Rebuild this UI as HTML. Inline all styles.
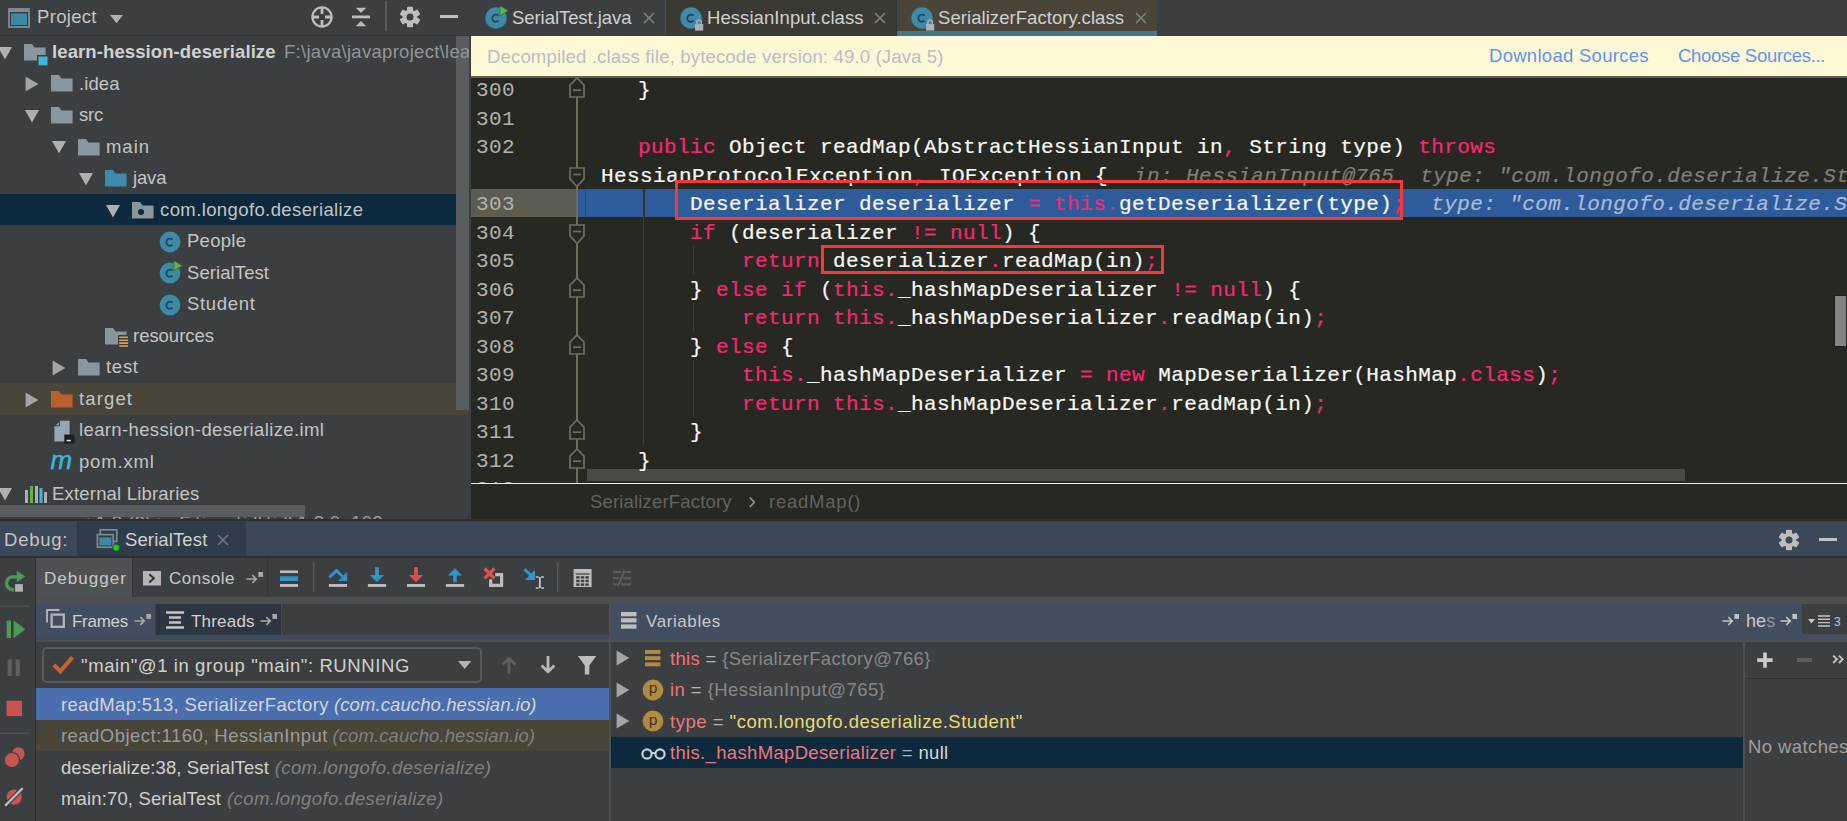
<!DOCTYPE html><html><head><meta charset="utf-8"><title>IDE</title>
<style>html,body{margin:0;padding:0}html{width:1847px;height:821px;overflow:hidden}body{width:1847px;height:821px;position:relative;overflow:hidden;background:#3c3f41;font-family:'Liberation Sans', sans-serif}.k{color:#f92672}.w{color:#f8f8f2}.h{color:#7f7f78;font-style:italic}.hb{color:#a9bbd8;font-style:italic}</style></head><body>
<div style="position:absolute;left:0;top:0;width:471px;height:520px;background:#3c3f41;overflow:hidden">
<div style="position:absolute;left:0px;top:35px;width:471px;height:1px;background:#323537;"></div>
<svg style="position:absolute;left:8px;top:8px;" width="22" height="20" viewBox="0 0 22 20"><rect x="1" y="1" width="20" height="18" fill="none" stroke="#7f8b93" stroke-width="1.8"/><rect x="1" y="1" width="20" height="3" fill="#7f8b93"/><rect x="3" y="5.5" width="16" height="11.5" fill="#3a8aa6"/></svg>
<div style="position:absolute;left:37px;top:2.0px;height:30px;line-height:30px;white-space:pre;font-family:'Liberation Sans', sans-serif;font-size:18.5px;letter-spacing:0.32px;font-weight:normal;font-style:normal;color:#c4c4c4;">Project</div>
<svg style="position:absolute;left:109.6px;top:14.5px;" width="13" height="9" viewBox="0 0 13 9"><path d="M0 0 H13 L6.5 8.3 Z" fill="#b0b0b0"/></svg>
<svg style="position:absolute;left:310px;top:5px;" width="24" height="24" viewBox="0 0 24 24"><circle cx="12" cy="12" r="9.6" fill="none" stroke="#bdbdbd" stroke-width="2.3"/><path d="M12 2 V9 M12 15 V22 M2 12 H9 M15 12 H22" stroke="#bdbdbd" stroke-width="2.8"/></svg>
<svg style="position:absolute;left:351px;top:6px;" width="20" height="22" viewBox="0 0 20 22"><path d="M1 10.9 H19" stroke="#bdbdbd" stroke-width="2.8"/><path d="M4.8 1.7 H15.2 L10 7 Z M4.8 20.2 H15.2 L10 14.9 Z" fill="#bdbdbd"/></svg>
<div style="position:absolute;left:385px;top:1px;width:1.7px;height:30px;background:#555758;"></div>
<svg style="position:absolute;left:399px;top:6px;" width="22" height="22" viewBox="0 0 22 22"><g transform="translate(11 11)"><rect x="-3" y="-10.2" width="6" height="20.4" rx="0.8" transform="rotate(0)" fill="#bdbdbd"/><rect x="-3" y="-10.2" width="6" height="20.4" rx="0.8" transform="rotate(60)" fill="#bdbdbd"/><rect x="-3" y="-10.2" width="6" height="20.4" rx="0.8" transform="rotate(120)" fill="#bdbdbd"/><circle r="7.4" fill="#bdbdbd"/><circle r="3.5" fill="#3c3f41"/></g></svg>
<div style="position:absolute;left:439.7px;top:15.4px;width:18.5px;height:3px;background:#bdbdbd;"></div>
<div style="position:absolute;left:0px;top:193.92999999999998px;width:471px;height:31.54px;background:#0d293e;"></div>
<div style="position:absolute;left:0px;top:383.17px;width:471px;height:31.54px;background:#494538;"></div>
<div style="position:absolute;left:456px;top:36px;width:13px;height:374px;background:#5a5d5f;"></div>
<svg style="position:absolute;left:-3px;top:45.8px;" width="16" height="14" viewBox="0 0 16 14"><path d="M1 1 L15 1 L8 13.5 Z" fill="#b0b0b0"/></svg>
<svg style="position:absolute;left:23.8px;top:44.10000000000001px;" width="22" height="17" viewBox="0 0 22 17"><path d="M0 0 H8 L10.5 3.4 H21.6 V16.4 H0 Z" fill="#8a969e"/></svg>
<svg style="position:absolute;left:36.5px;top:55.1px;" width="11" height="11" viewBox="0 0 11 11"><rect width="11" height="11" fill="#3c3f41"/><rect x="1.5" y="1.5" width="9" height="8.8" fill="#40b6e0"/></svg>
<div style="position:absolute;left:52px;top:37.0px;height:30px;line-height:30px;white-space:pre;font-family:'Liberation Sans', sans-serif;font-size:18.5px;letter-spacing:0.102px;font-weight:bold;font-style:normal;color:#d0d0d0;">learn-hession-deserialize</div>
<div style="position:absolute;left:284px;top:37.0px;height:30px;line-height:30px;white-space:pre;font-family:'Liberation Sans', sans-serif;font-size:18.5px;letter-spacing:0.288px;font-weight:normal;font-style:normal;color:#929597;">F:\java\javaproject\lea</div>
<svg style="position:absolute;left:25px;top:76.33999999999999px;" width="14" height="16" viewBox="0 0 14 16"><path d="M0.6 0.4 L13.4 8 L0.6 15.6 Z" fill="#a4a4a4"/></svg>
<svg style="position:absolute;left:51px;top:75.43999999999998px;" width="22" height="17" viewBox="0 0 22 17"><path d="M0 0 H8 L10.5 3.4 H21.6 V16.4 H0 Z" fill="#8a969e"/></svg>
<div style="position:absolute;left:79px;top:68.53999999999999px;height:30px;line-height:30px;white-space:pre;font-family:'Liberation Sans', sans-serif;font-size:18.5px;letter-spacing:0.094px;font-weight:normal;font-style:normal;color:#c4c4c4;">.idea</div>
<svg style="position:absolute;left:24px;top:108.88px;" width="16" height="14" viewBox="0 0 16 14"><path d="M1 1 L15 1 L8 13.5 Z" fill="#b0b0b0"/></svg>
<svg style="position:absolute;left:51px;top:106.97999999999999px;" width="22" height="17" viewBox="0 0 22 17"><path d="M0 0 H8 L10.5 3.4 H21.6 V16.4 H0 Z" fill="#8a969e"/></svg>
<div style="position:absolute;left:79px;top:100.08px;height:30px;line-height:30px;white-space:pre;font-family:'Liberation Sans', sans-serif;font-size:18.5px;letter-spacing:-0.186px;font-weight:normal;font-style:normal;color:#c4c4c4;">src</div>
<svg style="position:absolute;left:51px;top:140.42000000000002px;" width="16" height="14" viewBox="0 0 16 14"><path d="M1 1 L15 1 L8 13.5 Z" fill="#b0b0b0"/></svg>
<svg style="position:absolute;left:78px;top:138.52px;" width="22" height="17" viewBox="0 0 22 17"><path d="M0 0 H8 L10.5 3.4 H21.6 V16.4 H0 Z" fill="#8a969e"/></svg>
<div style="position:absolute;left:106px;top:131.62px;height:30px;line-height:30px;white-space:pre;font-family:'Liberation Sans', sans-serif;font-size:18.5px;letter-spacing:0.964px;font-weight:normal;font-style:normal;color:#c4c4c4;">main</div>
<svg style="position:absolute;left:78px;top:171.96px;" width="16" height="14" viewBox="0 0 16 14"><path d="M1 1 L15 1 L8 13.5 Z" fill="#b0b0b0"/></svg>
<svg style="position:absolute;left:105px;top:170.06px;" width="22" height="17" viewBox="0 0 22 17"><path d="M0 0 H8 L10.5 3.4 H21.6 V16.4 H0 Z" fill="#3d8daa"/></svg>
<div style="position:absolute;left:133px;top:163.16px;height:30px;line-height:30px;white-space:pre;font-family:'Liberation Sans', sans-serif;font-size:18.5px;letter-spacing:-0.151px;font-weight:normal;font-style:normal;color:#c4c4c4;">java</div>
<svg style="position:absolute;left:105px;top:203.5px;" width="16" height="14" viewBox="0 0 16 14"><path d="M1 1 L15 1 L8 13.5 Z" fill="#b0b0b0"/></svg>
<svg style="position:absolute;left:132px;top:201.6px;" width="22" height="17" viewBox="0 0 22 17"><path d="M0 0 H8 L10.5 3.4 H21.6 V16.4 H0 Z" fill="#8a969e"/></svg>
<svg style="position:absolute;left:137px;top:207.79999999999998px;" width="8" height="8" viewBox="0 0 8 8"><circle cx="4" cy="4" r="3" fill="#0d293e"/></svg>
<div style="position:absolute;left:160px;top:194.7px;height:30px;line-height:30px;white-space:pre;font-family:'Liberation Sans', sans-serif;font-size:18.5px;letter-spacing:0.393px;font-weight:normal;font-style:normal;color:#c4c4c4;">com.longofo.deserialize</div>
<svg style="position:absolute;left:157px;top:228.94px;" width="27" height="27" viewBox="0 0 27 27"><circle cx="13" cy="13" r="10.4" fill="#3d8ba8"/><path d="M15.5 10.7 A3.6 3.6 0 1 0 15.5 15.7" fill="none" stroke="#2a4452" stroke-width="1.75"/></svg>
<div style="position:absolute;left:187px;top:226.24px;height:30px;line-height:30px;white-space:pre;font-family:'Liberation Sans', sans-serif;font-size:18.5px;letter-spacing:0.278px;font-weight:normal;font-style:normal;color:#c4c4c4;">People</div>
<svg style="position:absolute;left:157px;top:260.47999999999996px;" width="27" height="27" viewBox="0 0 27 27"><circle cx="13" cy="13" r="10.4" fill="#3d8ba8"/><path d="M15.5 10.7 A3.6 3.6 0 1 0 15.5 15.7" fill="none" stroke="#2a4452" stroke-width="1.75"/><path d="M16.9 0.6 L25.4 5.7 L16.9 10.8 Z" fill="#5cb83f" stroke="#3c3f41" stroke-width="0.5"/></svg>
<div style="position:absolute;left:187px;top:257.78px;height:30px;line-height:30px;white-space:pre;font-family:'Liberation Sans', sans-serif;font-size:18.5px;letter-spacing:0.085px;font-weight:normal;font-style:normal;color:#c4c4c4;">SerialTest</div>
<svg style="position:absolute;left:157px;top:292.02px;" width="27" height="27" viewBox="0 0 27 27"><circle cx="13" cy="13" r="10.4" fill="#3d8ba8"/><path d="M15.5 10.7 A3.6 3.6 0 1 0 15.5 15.7" fill="none" stroke="#2a4452" stroke-width="1.75"/></svg>
<div style="position:absolute;left:187px;top:289.32px;height:30px;line-height:30px;white-space:pre;font-family:'Liberation Sans', sans-serif;font-size:18.5px;letter-spacing:0.67px;font-weight:normal;font-style:normal;color:#c4c4c4;">Student</div>
<svg style="position:absolute;left:105px;top:327.76000000000005px;" width="22" height="17" viewBox="0 0 22 17"><path d="M0 0 H8 L10.5 3.4 H21.6 V16.4 H0 Z" fill="#8a969e"/></svg>
<svg style="position:absolute;left:118px;top:335.46000000000004px;" width="10" height="12" viewBox="0 0 10 12"><rect width="10" height="12" fill="#3c3f41"/><path d="M1.2 2.3 H10 M1.2 5.2 H10 M1.2 8.1 H10 M1.2 11 H10" stroke="#d9a343" stroke-width="1.6"/></svg>
<div style="position:absolute;left:133px;top:320.86px;height:30px;line-height:30px;white-space:pre;font-family:'Liberation Sans', sans-serif;font-size:18.5px;letter-spacing:-0.029px;font-weight:normal;font-style:normal;color:#c4c4c4;">resources</div>
<svg style="position:absolute;left:52px;top:360.2px;" width="14" height="16" viewBox="0 0 14 16"><path d="M0.6 0.4 L13.4 8 L0.6 15.6 Z" fill="#a4a4a4"/></svg>
<svg style="position:absolute;left:78px;top:359.3px;" width="22" height="17" viewBox="0 0 22 17"><path d="M0 0 H8 L10.5 3.4 H21.6 V16.4 H0 Z" fill="#8a969e"/></svg>
<div style="position:absolute;left:106px;top:352.4px;height:30px;line-height:30px;white-space:pre;font-family:'Liberation Sans', sans-serif;font-size:18.5px;letter-spacing:0.724px;font-weight:normal;font-style:normal;color:#c4c4c4;">test</div>
<svg style="position:absolute;left:25px;top:391.74px;" width="14" height="16" viewBox="0 0 14 16"><path d="M0.6 0.4 L13.4 8 L0.6 15.6 Z" fill="#a4a4a4"/></svg>
<svg style="position:absolute;left:51px;top:390.84000000000003px;" width="22" height="17" viewBox="0 0 22 17"><path d="M0 0 H8 L10.5 3.4 H21.6 V16.4 H0 Z" fill="#b9602c"/></svg>
<div style="position:absolute;left:79px;top:383.94px;height:30px;line-height:30px;white-space:pre;font-family:'Liberation Sans', sans-serif;font-size:18.5px;letter-spacing:1.137px;font-weight:normal;font-style:normal;color:#c4c4c4;">target</div>
<svg style="position:absolute;left:54px;top:419.88px;" width="22" height="24" viewBox="0 0 22 24"><path d="M6.2 0.8 H15.6 V21.4 H0.4 V6.6 Z" fill="#9aa7b0"/><path d="M5.4 0.8 V5.8 H0.4 Z" fill="#9aa7b0" stroke="#3c3f41" stroke-width="1.1"/><rect x="10.3" y="14.5" width="10.2" height="9" fill="#1c1e20"/><rect x="12.6" y="19.8" width="4.2" height="1.5" fill="#e8e8e8"/></svg>
<div style="position:absolute;left:79px;top:415.48px;height:30px;line-height:30px;white-space:pre;font-family:'Liberation Sans', sans-serif;font-size:18.5px;letter-spacing:0.37px;font-weight:normal;font-style:normal;color:#c4c4c4;">learn-hession-deserialize.iml</div>
<div style="position:absolute;left:50.5px;top:445.21999999999997px;height:30px;line-height:30px;white-space:pre;font-family:'Liberation Sans', sans-serif;font-size:26px;letter-spacing:0px;font-weight:normal;font-style:italic;color:#3fb3dc;-webkit-text-stroke:0.5px #3fb3dc">m</div>
<div style="position:absolute;left:79px;top:447.02px;height:30px;line-height:30px;white-space:pre;font-family:'Liberation Sans', sans-serif;font-size:18.5px;letter-spacing:0.816px;font-weight:normal;font-style:normal;color:#c4c4c4;">pom.xml</div>
<svg style="position:absolute;left:-3px;top:487.36px;" width="16" height="14" viewBox="0 0 16 14"><path d="M1 1 L15 1 L8 13.5 Z" fill="#b0b0b0"/></svg>
<svg style="position:absolute;left:25px;top:485.46000000000004px;" width="22" height="18" viewBox="0 0 22 18"><rect x="0" y="5" width="3" height="13" fill="#a9afb4"/><rect x="5" y="1" width="3" height="17" fill="#62b543"/><rect x="10" y="1" width="3" height="17" fill="#a9afb4"/><rect x="14.5" y="3" width="3" height="15" fill="#40b6e0"/><rect x="19" y="7" width="3" height="11" fill="#a9afb4"/></svg>
<div style="position:absolute;left:52px;top:478.56px;height:30px;line-height:30px;white-space:pre;font-family:'Liberation Sans', sans-serif;font-size:18.5px;letter-spacing:0.191px;font-weight:normal;font-style:normal;color:#c4c4c4;">External Libraries</div>
<div style="position:absolute;left:79px;top:508.29999999999995px;height:30px;line-height:30px;white-space:pre;font-family:'Liberation Sans', sans-serif;font-size:18.5px;letter-spacing:0.35px;font-weight:normal;font-style:normal;color:#a0a0a0;">&lt; 1.8 (2) &gt;  F:\java\jdk\jdk1.8.0_102</div>
<div style="position:absolute;left:0px;top:505px;width:305px;height:12px;background:#5a5d5f;"></div>
<div style="position:absolute;left:469px;top:36px;width:2px;height:484px;background:#3c3f41;"></div>
</div>
<div style="position:absolute;left:471px;top:0;width:1376px;height:520px;background:#272822;overflow:hidden">
</div>
<div style="position:absolute;left:471px;top:0px;width:1376px;height:36px;background:#3c3f41;"></div>
<div style="position:absolute;left:666px;top:0px;width:231px;height:36px;background:#3a3a32;"></div>
<div style="position:absolute;left:897px;top:0px;width:260px;height:36px;background:#4a4538;"></div>
<div style="position:absolute;left:897px;top:31px;width:260px;height:5px;background:#457886;"></div>
<div style="position:absolute;left:665px;top:0px;width:1px;height:36px;background:#4a4a46;"></div>
<div style="position:absolute;left:896px;top:0px;width:1px;height:36px;background:#323537;"></div>
<svg style="position:absolute;left:483.2px;top:4.600000000000001px;" width="27" height="27" viewBox="0 0 27 27"><circle cx="13" cy="13" r="10.7" fill="#3d8ba8"/><path d="M15.5 10.7 A3.6 3.6 0 1 0 15.5 15.7" fill="none" stroke="#2a4452" stroke-width="1.75"/><path d="M16.9 0.6 L25.4 5.7 L16.9 10.8 Z" fill="#5cb83f" stroke="#3c3f41" stroke-width="0.5"/></svg>
<div style="position:absolute;left:512px;top:2.6000000000000014px;height:30px;line-height:30px;white-space:pre;font-family:'Liberation Sans', sans-serif;font-size:18.5px;letter-spacing:-0.058px;font-weight:normal;font-style:normal;color:#d0d0d0;">SerialTest.java</div>
<svg style="position:absolute;left:678px;top:4.600000000000001px;" width="27" height="27" viewBox="0 0 27 27"><circle cx="13" cy="13" r="10.7" fill="#3d8ba8"/><path d="M15.5 10.7 A3.6 3.6 0 1 0 15.5 15.7" fill="none" stroke="#2a4452" stroke-width="1.75"/><rect x="17" y="19" width="8.2" height="6.6" fill="#a9b0b8"/><path d="M18.9 19 V17.2 A2.2 2.2 0 0 1 23.3 17.2 V19" fill="none" stroke="#a9b0b8" stroke-width="1.5"/></svg>
<div style="position:absolute;left:707px;top:2.6000000000000014px;height:30px;line-height:30px;white-space:pre;font-family:'Liberation Sans', sans-serif;font-size:18.5px;letter-spacing:0.072px;font-weight:normal;font-style:normal;color:#d0d0d0;">HessianInput.class</div>
<svg style="position:absolute;left:909px;top:4.600000000000001px;" width="27" height="27" viewBox="0 0 27 27"><circle cx="13" cy="13" r="10.7" fill="#3d8ba8"/><path d="M15.5 10.7 A3.6 3.6 0 1 0 15.5 15.7" fill="none" stroke="#2a4452" stroke-width="1.75"/><rect x="17" y="19" width="8.2" height="6.6" fill="#a9b0b8"/><path d="M18.9 19 V17.2 A2.2 2.2 0 0 1 23.3 17.2 V19" fill="none" stroke="#a9b0b8" stroke-width="1.5"/></svg>
<div style="position:absolute;left:938px;top:2.6000000000000014px;height:30px;line-height:30px;white-space:pre;font-family:'Liberation Sans', sans-serif;font-size:18.5px;letter-spacing:0.059px;font-weight:normal;font-style:normal;color:#d0d0d0;">SerializerFactory.class</div>
<svg style="position:absolute;left:642.5px;top:12px;" width="12" height="12" viewBox="0 0 12 12"><path d="M1 1 L11 11 M11 1 L1 11" stroke="#7f8384" stroke-width="1.5"/></svg>
<svg style="position:absolute;left:874px;top:12px;" width="12" height="12" viewBox="0 0 12 12"><path d="M1 1 L11 11 M11 1 L1 11" stroke="#7f8384" stroke-width="1.5"/></svg>
<svg style="position:absolute;left:1134.5px;top:12px;" width="12" height="12" viewBox="0 0 12 12"><path d="M1 1 L11 11 M11 1 L1 11" stroke="#7f8384" stroke-width="1.5"/></svg>
<div style="position:absolute;left:471px;top:36px;width:1376px;height:40px;background:#fff8d4;"></div>
<div style="position:absolute;left:471px;top:75.6px;width:1376px;height:0.8px;background:#b9b59a;"></div>
<div style="position:absolute;left:471px;top:76.4px;width:1376px;height:1.6px;background:#5e5e52;"></div>
<div style="position:absolute;left:487px;top:41.8px;height:30px;line-height:30px;white-space:pre;font-family:'Liberation Sans', sans-serif;font-size:18.5px;letter-spacing:0.17px;font-weight:normal;font-style:normal;color:#b9bcc6;">Decompiled .class file, bytecode version: 49.0 (Java 5)</div>
<div style="position:absolute;left:1489px;top:41.0px;height:30px;line-height:30px;white-space:pre;font-family:'Liberation Sans', sans-serif;font-size:18.5px;letter-spacing:0.281px;font-weight:normal;font-style:normal;color:#5b96ee;">Download Sources</div>
<div style="position:absolute;left:1678px;top:41.0px;height:30px;line-height:30px;white-space:pre;font-family:'Liberation Sans', sans-serif;font-size:18.5px;letter-spacing:-0.294px;font-weight:normal;font-style:normal;color:#5b96ee;">Choose Sources...</div>
<div style="position:absolute;left:471px;top:189px;width:106px;height:28px;background:#5c5c50;"></div>
<div style="position:absolute;left:577px;top:189px;width:1270px;height:28px;background:#2e5c9a;"></div>
<div style="position:absolute;left:585px;top:189px;width:1px;height:28px;background:#254a7c;"></div>
<div style="position:absolute;left:643px;top:217.45px;width:1px;height:228.0px;background:#3b3c35;"></div>
<div style="position:absolute;left:693px;top:245.95px;width:1px;height:28.5px;background:#3b3c35;"></div>
<div style="position:absolute;left:693px;top:302.95px;width:1px;height:28.5px;background:#3b3c35;"></div>
<div style="position:absolute;left:693px;top:359.95px;width:1px;height:57.0px;background:#3b3c35;"></div>
<div style="position:absolute;left:643px;top:189px;width:2px;height:28px;background:#33342d;"></div>
<div style="position:absolute;left:575.9px;top:78px;width:1.7px;height:405px;background:#6e6e5e;"></div>
<svg style="position:absolute;left:568.7px;top:77.0px;" width="16" height="21" viewBox="0 0 16 21"><path d="M1 8.2 L8 1 L15 8.2 V20 H1 Z" fill="#272822" stroke="#6e6e5e" stroke-width="1.7"/><path d="M4 13.2 H12" stroke="#6e6e5e" stroke-width="1.7"/></svg>
<svg style="position:absolute;left:568.7px;top:167.2px;" width="16" height="21" viewBox="0 0 16 21"><path d="M1 1 H15 V11.8 L8 19.5 L1 11.8 Z" fill="#272822" stroke="#6e6e5e" stroke-width="1.7"/><path d="M4 7.5 H12" stroke="#6e6e5e" stroke-width="1.7"/></svg>
<svg style="position:absolute;left:568.7px;top:224.2px;" width="16" height="21" viewBox="0 0 16 21"><path d="M1 1 H15 V11.8 L8 19.5 L1 11.8 Z" fill="#272822" stroke="#6e6e5e" stroke-width="1.7"/><path d="M4 7.5 H12" stroke="#6e6e5e" stroke-width="1.7"/></svg>
<svg style="position:absolute;left:568.7px;top:276.5px;" width="16" height="21" viewBox="0 0 16 21"><path d="M1 8.2 L8 1 L15 8.2 V20 H1 Z" fill="#272822" stroke="#6e6e5e" stroke-width="1.7"/><path d="M4 13.2 H12" stroke="#6e6e5e" stroke-width="1.7"/></svg>
<svg style="position:absolute;left:568.7px;top:333.5px;" width="16" height="21" viewBox="0 0 16 21"><path d="M1 8.2 L8 1 L15 8.2 V20 H1 Z" fill="#272822" stroke="#6e6e5e" stroke-width="1.7"/><path d="M4 13.2 H12" stroke="#6e6e5e" stroke-width="1.7"/></svg>
<svg style="position:absolute;left:568.7px;top:419.0px;" width="16" height="21" viewBox="0 0 16 21"><path d="M1 8.2 L8 1 L15 8.2 V20 H1 Z" fill="#272822" stroke="#6e6e5e" stroke-width="1.7"/><path d="M4 13.2 H12" stroke="#6e6e5e" stroke-width="1.7"/></svg>
<svg style="position:absolute;left:568.7px;top:447.5px;" width="16" height="21" viewBox="0 0 16 21"><path d="M1 8.2 L8 1 L15 8.2 V20 H1 Z" fill="#272822" stroke="#6e6e5e" stroke-width="1.7"/><path d="M4 13.2 H12" stroke="#6e6e5e" stroke-width="1.7"/></svg>
<div style="position:absolute;left:587px;top:469px;width:1098px;height:12px;background:#4a4b45;"></div>
<div style="position:absolute;left:476px;top:77.41px;height:28px;line-height:28px;white-space:pre;font-family:'Liberation Mono', monospace;font-size:21px;letter-spacing:0.4px;-webkit-text-stroke:0.2px;color:#b2b2aa;-webkit-text-stroke:0">300</div>
<div style="position:absolute;left:476px;top:105.91px;height:28px;line-height:28px;white-space:pre;font-family:'Liberation Mono', monospace;font-size:21px;letter-spacing:0.4px;-webkit-text-stroke:0.2px;color:#b2b2aa;-webkit-text-stroke:0">301</div>
<div style="position:absolute;left:476px;top:134.41px;height:28px;line-height:28px;white-space:pre;font-family:'Liberation Mono', monospace;font-size:21px;letter-spacing:0.4px;-webkit-text-stroke:0.2px;color:#b2b2aa;-webkit-text-stroke:0">302</div>
<div style="position:absolute;left:476px;top:191.41px;height:28px;line-height:28px;white-space:pre;font-family:'Liberation Mono', monospace;font-size:21px;letter-spacing:0.4px;-webkit-text-stroke:0.2px;color:#b2b2aa;-webkit-text-stroke:0">303</div>
<div style="position:absolute;left:476px;top:219.91px;height:28px;line-height:28px;white-space:pre;font-family:'Liberation Mono', monospace;font-size:21px;letter-spacing:0.4px;-webkit-text-stroke:0.2px;color:#b2b2aa;-webkit-text-stroke:0">304</div>
<div style="position:absolute;left:476px;top:248.41px;height:28px;line-height:28px;white-space:pre;font-family:'Liberation Mono', monospace;font-size:21px;letter-spacing:0.4px;-webkit-text-stroke:0.2px;color:#b2b2aa;-webkit-text-stroke:0">305</div>
<div style="position:absolute;left:476px;top:276.91px;height:28px;line-height:28px;white-space:pre;font-family:'Liberation Mono', monospace;font-size:21px;letter-spacing:0.4px;-webkit-text-stroke:0.2px;color:#b2b2aa;-webkit-text-stroke:0">306</div>
<div style="position:absolute;left:476px;top:305.41px;height:28px;line-height:28px;white-space:pre;font-family:'Liberation Mono', monospace;font-size:21px;letter-spacing:0.4px;-webkit-text-stroke:0.2px;color:#b2b2aa;-webkit-text-stroke:0">307</div>
<div style="position:absolute;left:476px;top:333.91px;height:28px;line-height:28px;white-space:pre;font-family:'Liberation Mono', monospace;font-size:21px;letter-spacing:0.4px;-webkit-text-stroke:0.2px;color:#b2b2aa;-webkit-text-stroke:0">308</div>
<div style="position:absolute;left:476px;top:362.41px;height:28px;line-height:28px;white-space:pre;font-family:'Liberation Mono', monospace;font-size:21px;letter-spacing:0.4px;-webkit-text-stroke:0.2px;color:#b2b2aa;-webkit-text-stroke:0">309</div>
<div style="position:absolute;left:476px;top:390.91px;height:28px;line-height:28px;white-space:pre;font-family:'Liberation Mono', monospace;font-size:21px;letter-spacing:0.4px;-webkit-text-stroke:0.2px;color:#b2b2aa;-webkit-text-stroke:0">310</div>
<div style="position:absolute;left:476px;top:419.41px;height:28px;line-height:28px;white-space:pre;font-family:'Liberation Mono', monospace;font-size:21px;letter-spacing:0.4px;-webkit-text-stroke:0.2px;color:#b2b2aa;-webkit-text-stroke:0">311</div>
<div style="position:absolute;left:476px;top:447.91px;height:28px;line-height:28px;white-space:pre;font-family:'Liberation Mono', monospace;font-size:21px;letter-spacing:0.4px;-webkit-text-stroke:0.2px;color:#b2b2aa;-webkit-text-stroke:0">312</div>
<div style="position:absolute;left:471px;top:478px;width:110px;height:5px;overflow:hidden">
<div style="position:absolute;left:5px;top:-1.59px;height:28px;line-height:28px;font-family:'Liberation Mono', monospace;font-size:21px;letter-spacing:0.4px;color:#b8b8b0">313</div></div>
<div style="position:absolute;left:586px;top:77.41px;height:28px;line-height:28px;white-space:pre;font-family:'Liberation Mono', monospace;font-size:21px;letter-spacing:0.4px;-webkit-text-stroke:0.2px;"><span class="w">    }</span></div>
<div style="position:absolute;left:586px;top:134.41px;height:28px;line-height:28px;white-space:pre;font-family:'Liberation Mono', monospace;font-size:21px;letter-spacing:0.4px;-webkit-text-stroke:0.2px;"><span class="w">    </span><span class="k">public</span><span class="w"> Object readMap(AbstractHessianInput in</span><span class="k">,</span><span class="w"> String type) </span><span class="k">throws</span></div>
<div style="position:absolute;left:586px;top:191.41px;height:28px;line-height:28px;white-space:pre;font-family:'Liberation Mono', monospace;font-size:21px;letter-spacing:0.4px;-webkit-text-stroke:0.2px;"><span class="w">        Deserializer deserializer </span><span class="k">=</span><span class="k"> this.</span><span class="w">getDeserializer(type)</span><span class="k">;</span><span class="hb">  type: &quot;com.longofo.deserialize.Student&quot;</span></div>
<div style="position:absolute;left:586px;top:219.91px;height:28px;line-height:28px;white-space:pre;font-family:'Liberation Mono', monospace;font-size:21px;letter-spacing:0.4px;-webkit-text-stroke:0.2px;"><span class="w">        </span><span class="k">if</span><span class="w"> (deserializer </span><span class="k">!=</span><span class="k"> null</span><span class="w">) {</span></div>
<div style="position:absolute;left:586px;top:248.41px;height:28px;line-height:28px;white-space:pre;font-family:'Liberation Mono', monospace;font-size:21px;letter-spacing:0.4px;-webkit-text-stroke:0.2px;"><span class="w">            </span><span class="k">return</span><span class="w"> deserializer</span><span class="k">.</span><span class="w">readMap(in)</span><span class="k">;</span></div>
<div style="position:absolute;left:586px;top:276.91px;height:28px;line-height:28px;white-space:pre;font-family:'Liberation Mono', monospace;font-size:21px;letter-spacing:0.4px;-webkit-text-stroke:0.2px;"><span class="w">        } </span><span class="k">else if</span><span class="w"> (</span><span class="k">this.</span><span class="w">_hashMapDeserializer </span><span class="k">!=</span><span class="k"> null</span><span class="w">) {</span></div>
<div style="position:absolute;left:586px;top:305.41px;height:28px;line-height:28px;white-space:pre;font-family:'Liberation Mono', monospace;font-size:21px;letter-spacing:0.4px;-webkit-text-stroke:0.2px;"><span class="w">            </span><span class="k">return this.</span><span class="w">_hashMapDeserializer</span><span class="k">.</span><span class="w">readMap(in)</span><span class="k">;</span></div>
<div style="position:absolute;left:586px;top:333.91px;height:28px;line-height:28px;white-space:pre;font-family:'Liberation Mono', monospace;font-size:21px;letter-spacing:0.4px;-webkit-text-stroke:0.2px;"><span class="w">        } </span><span class="k">else</span><span class="w"> {</span></div>
<div style="position:absolute;left:586px;top:362.41px;height:28px;line-height:28px;white-space:pre;font-family:'Liberation Mono', monospace;font-size:21px;letter-spacing:0.4px;-webkit-text-stroke:0.2px;"><span class="w">            </span><span class="k">this.</span><span class="w">_hashMapDeserializer </span><span class="k">=</span><span class="k"> new</span><span class="w"> MapDeserializer(HashMap</span><span class="k">.class</span><span class="w">)</span><span class="k">;</span></div>
<div style="position:absolute;left:586px;top:390.91px;height:28px;line-height:28px;white-space:pre;font-family:'Liberation Mono', monospace;font-size:21px;letter-spacing:0.4px;-webkit-text-stroke:0.2px;"><span class="w">            </span><span class="k">return this.</span><span class="w">_hashMapDeserializer</span><span class="k">.</span><span class="w">readMap(in)</span><span class="k">;</span></div>
<div style="position:absolute;left:586px;top:419.41px;height:28px;line-height:28px;white-space:pre;font-family:'Liberation Mono', monospace;font-size:21px;letter-spacing:0.4px;-webkit-text-stroke:0.2px;"><span class="w">        }</span></div>
<div style="position:absolute;left:586px;top:447.91px;height:28px;line-height:28px;white-space:pre;font-family:'Liberation Mono', monospace;font-size:21px;letter-spacing:0.4px;-webkit-text-stroke:0.2px;"><span class="w">    }</span></div>
<div style="position:absolute;left:601px;top:162.91px;height:28px;line-height:28px;white-space:pre;font-family:'Liberation Mono', monospace;font-size:21px;letter-spacing:0.4px;-webkit-text-stroke:0.2px;"><span class="w">HessianProtocolException</span><span class="k">,</span><span class="w"> IOException {</span><span class="h">  in: HessianInput@765  type: &quot;com.longofo.deserialize.Student&quot;</span></div>
<div style="position:absolute;left:675px;top:180px;width:722px;height:34px;border:3px solid #f5383a"></div>
<div style="position:absolute;left:821px;top:245px;width:337px;height:23px;border:3px solid #f5383a"></div>
<div style="position:absolute;left:1834px;top:295px;width:13px;height:52px;background:#1f201c;"></div>
<div style="position:absolute;left:1835px;top:296px;width:11px;height:50px;background:#838383;"></div>
<div style="position:absolute;left:471px;top:483px;width:1376px;height:1px;background:#e8e8e8;"></div>
<div style="position:absolute;left:471px;top:484px;width:1376px;height:35px;background:#272822;"></div>
<div style="position:absolute;left:590px;top:487.0px;height:30px;line-height:30px;white-space:pre;font-family:'Liberation Sans', sans-serif;font-size:18.5px;letter-spacing:0.169px;font-weight:normal;font-style:normal;color:#62635f;">SerializerFactory</div>
<svg style="position:absolute;left:748px;top:496px;" width="9" height="13" viewBox="0 0 9 13"><path d="M1.8 1.6 L6.4 6.3 L1.8 11" fill="none" stroke="#9a9a98" stroke-width="1.5"/></svg>
<div style="position:absolute;left:769px;top:487.0px;height:30px;line-height:30px;white-space:pre;font-family:'Liberation Sans', sans-serif;font-size:18.5px;letter-spacing:0.77px;font-weight:normal;font-style:normal;color:#62635f;">readMap()</div>
<div style="position:absolute;left:0px;top:519px;width:1847px;height:2px;background:#2b2d30;"></div>
<div style="position:absolute;left:0px;top:521px;width:1847px;height:36px;background:#3c4757;"></div>
<div style="position:absolute;left:77px;top:521px;width:169px;height:36px;background:#313c4b;"></div>
<div style="position:absolute;left:4px;top:524.7px;height:30px;line-height:30px;white-space:pre;font-family:'Liberation Sans', sans-serif;font-size:18.5px;letter-spacing:0.769px;font-weight:normal;font-style:normal;color:#c4c4c4;">Debug:</div>
<svg style="position:absolute;left:94px;top:526px" width="28" height="26" viewBox="94 526 28 26"><rect x="100.2" y="529.8" width="16.6" height="11.6" fill="none" stroke="#7d8a95" stroke-width="1.7"/><rect x="97.4" y="534.6" width="15.8" height="12.6" fill="#313c4b" stroke="#7d8a95" stroke-width="1.7"/><rect x="99.3" y="537.4" width="12" height="8" fill="#3a8aa6"/><circle cx="116.2" cy="547.6" r="3.9" fill="#313c4b"/><circle cx="116.2" cy="547.6" r="3.1" fill="#0fd40f"/></svg>
<div style="position:absolute;left:125px;top:524.7px;height:30px;line-height:30px;white-space:pre;font-family:'Liberation Sans', sans-serif;font-size:18.5px;letter-spacing:0.118px;font-weight:normal;font-style:normal;color:#d0d0d0;">SerialTest</div>
<svg style="position:absolute;left:217px;top:534px;" width="12" height="12" viewBox="0 0 12 12"><path d="M1 1 L11 11 M11 1 L1 11" stroke="#6f7a88" stroke-width="1.5"/></svg>
<svg style="position:absolute;left:1778px;top:528.5px;" width="22" height="22" viewBox="0 0 22 22"><g transform="translate(11 11)"><rect x="-3" y="-10.2" width="6" height="20.4" rx="0.8" transform="rotate(0)" fill="#bdbdbd"/><rect x="-3" y="-10.2" width="6" height="20.4" rx="0.8" transform="rotate(60)" fill="#bdbdbd"/><rect x="-3" y="-10.2" width="6" height="20.4" rx="0.8" transform="rotate(120)" fill="#bdbdbd"/><circle r="7.4" fill="#bdbdbd"/><circle r="3.5" fill="#3c4757"/></g></svg>
<div style="position:absolute;left:1819px;top:538px;width:18px;height:3px;background:#c0c0c0;"></div>
<div style="position:absolute;left:0px;top:556px;width:1847px;height:2px;background:#2d3033;"></div>
<div style="position:absolute;left:0px;top:558px;width:1847px;height:263px;background:#3c3f41;"></div>
<div style="position:absolute;left:35px;top:558px;width:1px;height:263px;background:#2d3033;"></div>
<svg style="position:absolute;left:0;top:558px" width="35" height="263" viewBox="0 558 35 263"><path d="M17.2 576.9 H12.9 A6.3 6.3 0 0 0 12.9 589.7 H14.5" fill="none" stroke="#499c54" stroke-width="3.4"/><path d="M16.8 570.7 L25.2 576.6 L16.8 582.3 Z" fill="#499c54"/><rect x="14.3" y="583.3" width="9.4" height="9.2" fill="#3c3f41"/><rect x="15.1" y="584.1" width="7.8" height="7.6" fill="#afb1b3"/><rect x="0" y="605.6" width="29" height="1.3" fill="#515456"/><rect x="6.7" y="620.6" width="4.3" height="17.4" fill="#499c54"/><path d="M13.6 620.4 L25.4 629.3 L13.6 638.2 Z" fill="#499c54"/><rect x="7.6" y="659.5" width="4.2" height="16.5" fill="#5e6164"/><rect x="15.6" y="659.5" width="4.2" height="16.5" fill="#5e6164"/><rect x="6.6" y="700.7" width="15.4" height="15.4" fill="#c75450"/><rect x="0" y="732.6" width="29" height="1.3" fill="#515456"/><circle cx="18.3" cy="753.7" r="6.4" fill="#c75450"/><circle cx="11.9" cy="760.1" r="8.2" fill="#3c3f41"/><circle cx="11.9" cy="760.1" r="7" fill="#c75450"/><circle cx="14.2" cy="797.1" r="7.6" fill="#c75450"/><path d="M5.5 805.3 L22.4 788.4" stroke="#3c3f41" stroke-width="4.6"/><path d="M5.2 805.6 L22.7 788.1" stroke="#bdbdbd" stroke-width="2.2"/></svg>
<div style="position:absolute;left:36px;top:558px;width:97px;height:39px;background:#4e5254;"></div>
<div style="position:absolute;left:132px;top:558px;width:1px;height:39px;background:#323537;"></div>
<div style="position:absolute;left:267px;top:558px;width:1px;height:39px;background:#323537;"></div>
<div style="position:absolute;left:44px;top:563.9px;height:30px;line-height:30px;white-space:pre;font-family:'Liberation Sans', sans-serif;font-size:17px;letter-spacing:1.047px;font-weight:normal;font-style:normal;color:#c8c8c8;">Debugger</div>
<svg style="position:absolute;left:142.9px;top:571px;" width="18" height="14.5" viewBox="0 0 18 14.5"><rect width="18" height="14.5" fill="#b4b4b4"/><path d="M6.3 3.2 L10.8 7.3 L6.3 11.4" fill="none" stroke="#2f3234" stroke-width="2"/></svg>
<div style="position:absolute;left:169px;top:563.9px;height:30px;line-height:30px;white-space:pre;font-family:'Liberation Sans', sans-serif;font-size:17px;letter-spacing:0.521px;font-weight:normal;font-style:normal;color:#c8c8c8;">Console</div>
<svg style="position:absolute;left:246px;top:571.6px;" width="18" height="12" viewBox="0 0 18 12"><path d="M0.5 7 H10 M6.3 3.2 L10.3 7 L6.3 10.8" fill="none" stroke="#a8a8a8" stroke-width="1.6"/><rect x="12.4" y="0" width="4.6" height="4.9" fill="#a8a8a8"/></svg>
<svg style="position:absolute;left:270px;top:558px" width="370" height="42" viewBox="270 558 370 42"><rect x="280" y="570.4" width="18" height="2.7" fill="#bdbdbd"/><rect x="280" y="576.3" width="18" height="4.7" fill="#3592c4"/><rect x="280" y="584" width="18" height="2.9" fill="#bdbdbd"/><rect x="313" y="562" width="1.5" height="30" fill="#555859"/><path d="M329.3 577.4 L336.5 570.6 L342.5 576.5" fill="none" stroke="#3592c4" stroke-width="3"/><path d="M347.1 571.7 V581 H338 Z" fill="#3592c4"/><rect x="328.9" y="584" width="18.2" height="2.9" fill="#bdbdbd"/><rect x="375.15" y="567.1" width="3.7" height="9" fill="#3592c4"/><path d="M369.8 574.9 H384.2 L377 582.2 Z" fill="#3592c4"/><rect x="367.9" y="584" width="18.2" height="2.9" fill="#bdbdbd"/><rect x="414.15" y="567.1" width="3.7" height="9" fill="#d9534f"/><path d="M408.8 574.9 H423.2 L416 582.2 Z" fill="#d9534f"/><rect x="406.9" y="584" width="18.2" height="2.9" fill="#bdbdbd"/><rect x="453.15" y="574" width="3.7" height="8.2" fill="#3592c4"/><path d="M447.8 575.6 H462.2 L455 568.2 Z" fill="#3592c4"/><rect x="445.9" y="584" width="18.2" height="2.9" fill="#bdbdbd"/><path d="M495.2 574.6 H501.6 V585.4 H490.7 V579.2" fill="none" stroke="#bdbdbd" stroke-width="3.2"/><path d="M484.6 568.5 L494.4 578.3 M494.4 568.5 L484.6 578.3" stroke="#d9534f" stroke-width="3.2"/><path d="M524.6 569.3 L531 575.3" stroke="#3592c4" stroke-width="3.1"/><path d="M535 569.7 V579.9 H524.8 Z" fill="#3592c4"/><path d="M535.8 577 H538.7 M541 577 H543.9 M535.8 588 H538.7 M541 588 H543.9" stroke="#c4c4c4" stroke-width="1.6"/><rect x="538.9" y="577" width="1.9" height="11" fill="#c4c4c4"/><rect x="557" y="562" width="1.5" height="30" fill="#555859"/><rect x="573.6" y="569" width="18" height="18" fill="#bdbdbd"/><rect x="575.6" y="573.4" width="14" height="1.2" fill="#3c3f41"/><rect x="576.2" y="576.2" width="3.4" height="2.4" fill="#3c3f41"/><rect x="576.2" y="579.8000000000001" width="3.4" height="2.4" fill="#3c3f41"/><rect x="576.2" y="583.4000000000001" width="3.4" height="2.4" fill="#3c3f41"/><rect x="580.8000000000001" y="576.2" width="3.4" height="2.4" fill="#3c3f41"/><rect x="580.8000000000001" y="579.8000000000001" width="3.4" height="2.4" fill="#3c3f41"/><rect x="580.8000000000001" y="583.4000000000001" width="3.4" height="2.4" fill="#3c3f41"/><rect x="585.4000000000001" y="576.2" width="3.4" height="2.4" fill="#3c3f41"/><rect x="585.4000000000001" y="579.8000000000001" width="3.4" height="2.4" fill="#3c3f41"/><rect x="585.4000000000001" y="583.4000000000001" width="3.4" height="2.4" fill="#3c3f41"/><path d="M613 572 H621 M625 572 H631 M613 578.2 H619 M623 578.2 H631 M613 584.4 H617 M621 584.4 H631 M624.5 570.5 L618 586" stroke="#5a5d5f" stroke-width="2.2" fill="none"/></svg>
<div style="position:absolute;left:36px;top:597px;width:1811px;height:7px;background:#4c5052;"></div>
<div style="position:absolute;left:36px;top:604px;width:573px;height:32px;background:#3c3f41;"></div>
<div style="position:absolute;left:36px;top:604px;width:120px;height:32px;background:#424d5f;"></div>
<div style="position:absolute;left:156px;top:604px;width:125px;height:32px;background:#2e3642;"></div>
<div style="position:absolute;left:155px;top:604px;width:1px;height:32px;background:#3a4352;"></div>
<div style="position:absolute;left:281px;top:604px;width:1px;height:32px;background:#484c4f;"></div>
<svg style="position:absolute;left:46px;top:609px;" width="20" height="20" viewBox="0 0 20 20"><path d="M1 13.5 V1 H13.5" fill="none" stroke="#b4b4b4" stroke-width="1.9"/><rect x="5.6" y="5.6" width="12.2" height="12.2" fill="none" stroke="#b4b4b4" stroke-width="2.3"/></svg>
<div style="position:absolute;left:72px;top:606.9px;height:30px;line-height:30px;white-space:pre;font-family:'Liberation Sans', sans-serif;font-size:17px;letter-spacing:-0.265px;font-weight:normal;font-style:normal;color:#d0d0d0;">Frames</div>
<svg style="position:absolute;left:134px;top:613.8px;" width="18" height="12" viewBox="0 0 18 12"><path d="M0.5 7 H10 M6.3 3.2 L10.3 7 L6.3 10.8" fill="none" stroke="#a8a8a8" stroke-width="1.6"/><rect x="12.4" y="0" width="4.6" height="4.9" fill="#a8a8a8"/></svg>
<svg style="position:absolute;left:166px;top:611px;" width="18" height="18" viewBox="0 0 18 18"><path d="M0 1.5 H18 M3 6.5 H15 M3 11.5 H15 M0 16.5 H18" stroke="#c4c4c4" stroke-width="2.6"/></svg>
<div style="position:absolute;left:191px;top:606.9px;height:30px;line-height:30px;white-space:pre;font-family:'Liberation Sans', sans-serif;font-size:17px;letter-spacing:0.204px;font-weight:normal;font-style:normal;color:#d0d0d0;">Threads</div>
<svg style="position:absolute;left:259.5px;top:613.8px;" width="18" height="12" viewBox="0 0 18 12"><path d="M0.5 7 H10 M6.3 3.2 L10.3 7 L6.3 10.8" fill="none" stroke="#a8a8a8" stroke-width="1.6"/><rect x="12.4" y="0" width="4.6" height="4.9" fill="#a8a8a8"/></svg>
<div style="position:absolute;left:36px;top:634.5px;width:573px;height:1.5px;background:#484c4f;"></div>
<div style="position:absolute;left:36px;top:636px;width:573px;height:4px;background:#3f4a5b;"></div>
<div style="position:absolute;left:36px;top:640px;width:575px;height:2px;background:#4c5052;"></div>
<div style="position:absolute;left:41.5px;top:646.5px;width:436.5px;height:32px;border:2px solid #585b5d;border-radius:5px;box-sizing:content-box"></div>
<svg style="position:absolute;left:52px;top:654px;" width="23" height="21" viewBox="0 0 23 21"><path d="M2 11 L8.3 17.3 L20.5 3.2" fill="none" stroke="#cc622c" stroke-width="4"/></svg>
<div style="position:absolute;left:81px;top:650.7px;height:30px;line-height:30px;white-space:pre;font-family:'Liberation Sans', sans-serif;font-size:18.5px;letter-spacing:0.594px;font-weight:normal;font-style:normal;color:#d0d0d0;">&quot;main&quot;@1 in group &quot;main&quot;: RUNNING</div>
<svg style="position:absolute;left:458px;top:661px;" width="14" height="9" viewBox="0 0 14 9"><path d="M0 0 H13.4 L6.7 8 Z" fill="#b4b4b4"/></svg>
<svg style="position:absolute;left:501px;top:655.9px;" width="16" height="18" viewBox="0 0 16 18"><path d="M8 18 V2.2 M1.6 8.6 L8 2.2 L14.4 8.6" fill="none" stroke="#5c5f61" stroke-width="2.8"/></svg>
<svg style="position:absolute;left:540px;top:655.9px;" width="16" height="18" viewBox="0 0 16 18"><path d="M8 0 V15.8 M1.6 9.4 L8 15.8 L14.4 9.4" fill="none" stroke="#b8b8b8" stroke-width="2.8"/></svg>
<svg style="position:absolute;left:578px;top:655.6px;" width="19" height="19" viewBox="0 0 19 19"><path d="M0 0 H18.2 L11.3 9.6 V18.4 H6.8 V9.6 Z" fill="#bdbdbd"/></svg>
<div style="position:absolute;left:36px;top:688.0px;width:573px;height:31.5px;background:#4b6eaf;"></div>
<div style="position:absolute;left:36px;top:719.5px;width:573px;height:31.5px;background:#494538;"></div>
<div style="position:absolute;left:61px;top:689.55px;height:30px;line-height:30px;white-space:pre;font-family:'Liberation Sans', sans-serif;font-size:18.5px;letter-spacing:0.321px;font-weight:normal;font-style:normal;color:#d2d6dc;">readMap:513, SerializerFactory</div>
<div style="position:absolute;left:334px;top:689.55px;height:30px;line-height:30px;white-space:pre;font-family:'Liberation Sans', sans-serif;font-size:18.5px;letter-spacing:0.09px;font-weight:normal;font-style:italic;color:#d2d6dc;">(com.caucho.hessian.io)</div>
<div style="position:absolute;left:61px;top:721.05px;height:30px;line-height:30px;white-space:pre;font-family:'Liberation Sans', sans-serif;font-size:18.5px;letter-spacing:0.45px;font-weight:normal;font-style:normal;color:#9a9a9a;">readObject:1160, HessianInput</div>
<div style="position:absolute;left:332.5px;top:721.05px;height:30px;line-height:30px;white-space:pre;font-family:'Liberation Sans', sans-serif;font-size:18.5px;letter-spacing:0.09px;font-weight:normal;font-style:italic;color:#808080;">(com.caucho.hessian.io)</div>
<div style="position:absolute;left:61px;top:752.55px;height:30px;line-height:30px;white-space:pre;font-family:'Liberation Sans', sans-serif;font-size:18.5px;letter-spacing:0.085px;font-weight:normal;font-style:normal;color:#d0d0d0;">deserialize:38, SerialTest</div>
<div style="position:absolute;left:274.7px;top:752.55px;height:30px;line-height:30px;white-space:pre;font-family:'Liberation Sans', sans-serif;font-size:18.5px;letter-spacing:0.401px;font-weight:normal;font-style:italic;color:#808080;">(com.longofo.deserialize)</div>
<div style="position:absolute;left:61px;top:784.05px;height:30px;line-height:30px;white-space:pre;font-family:'Liberation Sans', sans-serif;font-size:18.5px;letter-spacing:0.148px;font-weight:normal;font-style:normal;color:#d0d0d0;">main:70, SerialTest</div>
<div style="position:absolute;left:227px;top:784.05px;height:30px;line-height:30px;white-space:pre;font-family:'Liberation Sans', sans-serif;font-size:18.5px;letter-spacing:0.396px;font-weight:normal;font-style:italic;color:#808080;">(com.longofo.deserialize)</div>
<div style="position:absolute;left:609px;top:604px;width:2px;height:217px;background:#4d5153;"></div>
<div style="position:absolute;left:611px;top:604px;width:1132px;height:36px;background:#434e60;"></div>
<div style="position:absolute;left:611px;top:640px;width:1236px;height:2px;background:#4c5052;"></div>
<svg style="position:absolute;left:621.2px;top:612.1px;" width="16" height="17" viewBox="0 0 16 17"><rect y="0" width="15.5" height="4.3" fill="#bdbdbd"/><rect y="6.2" width="15.5" height="4.3" fill="#bdbdbd"/><rect y="12.4" width="15.5" height="4.3" fill="#bdbdbd"/></svg>
<div style="position:absolute;left:646px;top:606.9px;height:30px;line-height:30px;white-space:pre;font-family:'Liberation Sans', sans-serif;font-size:17px;letter-spacing:0.584px;font-weight:normal;font-style:normal;color:#c8c8c8;">Variables</div>
<div style="position:absolute;left:611px;top:736.75px;width:1132px;height:31.5px;background:#0d293e;"></div>
<svg style="position:absolute;left:616px;top:650.0px;" width="14" height="16" viewBox="0 0 14 16"><path d="M0.6 0.4 L13.4 8 L0.6 15.6 Z" fill="#a4a4a4"/></svg>
<svg style="position:absolute;left:616px;top:681.5px;" width="14" height="16" viewBox="0 0 14 16"><path d="M0.6 0.4 L13.4 8 L0.6 15.6 Z" fill="#a4a4a4"/></svg>
<svg style="position:absolute;left:616px;top:713.0px;" width="14" height="16" viewBox="0 0 14 16"><path d="M0.6 0.4 L13.4 8 L0.6 15.6 Z" fill="#a4a4a4"/></svg>
<svg style="position:absolute;left:645.4px;top:650px;" width="16" height="17" viewBox="0 0 16 17"><rect y="0" width="15.4" height="3.9" fill="#b58a3c"/><rect y="6.2" width="15.4" height="3.9" fill="#b58a3c"/><rect y="12.4" width="15.4" height="3.9" fill="#b58a3c"/></svg>
<svg style="position:absolute;left:641.9px;top:678.8px;" width="22" height="22" viewBox="0 0 22 22"><circle cx="11" cy="11" r="10.4" fill="#b58a3c"/></svg>
<div style="position:absolute;left:648.8px;top:673.4px;height:30px;line-height:30px;white-space:pre;font-family:'Liberation Sans', sans-serif;font-size:15.5px;letter-spacing:0px;font-weight:normal;font-style:normal;color:#33363a;">p</div>
<svg style="position:absolute;left:641.9px;top:710.3px;" width="22" height="22" viewBox="0 0 22 22"><circle cx="11" cy="11" r="10.4" fill="#b58a3c"/></svg>
<div style="position:absolute;left:648.8px;top:704.9px;height:30px;line-height:30px;white-space:pre;font-family:'Liberation Sans', sans-serif;font-size:15.5px;letter-spacing:0px;font-weight:normal;font-style:normal;color:#33363a;">p</div>
<svg style="position:absolute;left:641px;top:747.5px;" width="25" height="12" viewBox="0 0 25 12"><circle cx="6" cy="6" r="4.6" fill="none" stroke="#c8d0d8" stroke-width="2.2"/><circle cx="19" cy="6" r="4.6" fill="none" stroke="#c8d0d8" stroke-width="2.2"/><path d="M10.5 5 H14.5" stroke="#c8d0d8" stroke-width="2"/></svg>
<div style="position:absolute;left:670px;top:643.7px;height:30px;line-height:30px;white-space:pre;font-family:'Liberation Sans', sans-serif;font-size:18.5px;letter-spacing:0.332px;font-weight:normal;font-style:normal;color:#c4c4c4;"><span style="color:#ee7878">this</span><span style="color:#b4b4b4"> = </span><span style="color:#878787">{SerializerFactory@766}</span></div>
<div style="position:absolute;left:670px;top:675.2px;height:30px;line-height:30px;white-space:pre;font-family:'Liberation Sans', sans-serif;font-size:18.5px;letter-spacing:0.423px;font-weight:normal;font-style:normal;color:#c4c4c4;"><span style="color:#ee7878">in</span><span style="color:#b4b4b4"> = </span><span style="color:#878787">{HessianInput@765}</span></div>
<div style="position:absolute;left:670px;top:706.7px;height:30px;line-height:30px;white-space:pre;font-family:'Liberation Sans', sans-serif;font-size:18.5px;letter-spacing:0.508px;font-weight:normal;font-style:normal;color:#c4c4c4;"><span style="color:#ee7878">type</span><span style="color:#b4b4b4"> = </span><span style="color:#e6db74">&quot;com.longofo.deserialize.Student&quot;</span></div>
<div style="position:absolute;left:670px;top:738.2px;height:30px;line-height:30px;white-space:pre;font-family:'Liberation Sans', sans-serif;font-size:18.5px;letter-spacing:0.333px;font-weight:normal;font-style:normal;color:#c4c4c4;"><span style="color:#ee7878">this._hashMapDeserializer</span><span style="color:#b4b4b4"> = </span><span style="color:#d8d8d8">null</span></div>
<div style="position:absolute;left:1743px;top:604px;width:2px;height:217px;background:#4c5052;"></div>
<div style="position:absolute;left:1745px;top:604px;width:102px;height:36px;background:#434e60;"></div>
<svg style="position:absolute;left:1722px;top:613.8px;" width="18" height="12" viewBox="0 0 18 12"><path d="M0.5 7 H10 M6.3 3.2 L10.3 7 L6.3 10.8" fill="none" stroke="#c4c4c4" stroke-width="1.6"/><rect x="12.4" y="0" width="4.6" height="4.9" fill="#c4c4c4"/></svg>
<div style="position:absolute;left:1746px;top:606.0px;height:30px;line-height:30px;white-space:pre;font-family:'Liberation Sans', sans-serif;font-size:18px;letter-spacing:0.1px;font-weight:normal;font-style:normal;color:#c8c8c8;">he<span style="color:#8c95a3">s</span></div>
<svg style="position:absolute;left:1779.5px;top:613.8px;" width="18" height="12" viewBox="0 0 18 12"><path d="M0.5 7 H10 M6.3 3.2 L10.3 7 L6.3 10.8" fill="none" stroke="#c4c4c4" stroke-width="1.6"/><rect x="12.4" y="0" width="4.6" height="4.9" fill="#c4c4c4"/></svg>
<div style="position:absolute;left:1801px;top:604px;width:46px;height:31px;background:#494d51;"></div>
<div style="position:absolute;left:1802px;top:604px;width:45px;height:30px;background:#3c3f41;"></div>
<svg style="position:absolute;left:1808px;top:614px;" width="36" height="14" viewBox="0 0 36 14"><path d="M0 5 H7 L3.5 9.5 Z" fill="#c4c4c4"/><path d="M10 2 H22 M10 5.3 H22 M10 8.6 H22 M10 12 H22" stroke="#c4c4c4" stroke-width="1.4"/></svg>
<div style="position:absolute;left:1834px;top:607.0px;height:30px;line-height:30px;white-space:pre;font-family:'Liberation Sans', sans-serif;font-size:12px;letter-spacing:0px;font-weight:normal;font-style:normal;color:#c4c4c4;">3</div>
<div style="position:absolute;left:1745px;top:678px;width:102px;height:1.2px;background:#2f3234;"></div>
<svg style="position:absolute;left:1757px;top:652px;" width="17" height="17" viewBox="0 0 17 17"><path d="M8 0.4 V15.8 M0.2 8.1 H15.6" stroke="#cacaca" stroke-width="3.7"/></svg>
<div style="position:absolute;left:1796.5px;top:658.2px;width:15.2px;height:3.4px;background:#5c5f61;"></div>
<svg style="position:absolute;left:1832px;top:654px;" width="14" height="11" viewBox="0 0 14 11"><path d="M1.2 1.6 L5 5.3 L1.2 9 M6.9 1.6 L10.7 5.3 L6.9 9" fill="none" stroke="#c0c0c0" stroke-width="1.9"/></svg>
<div style="position:absolute;left:1748px;top:731.7px;height:30px;line-height:30px;white-space:pre;font-family:'Liberation Sans', sans-serif;font-size:18.5px;letter-spacing:0.4px;font-weight:normal;font-style:normal;color:#9e9e9e;">No watches</div>
</body></html>
